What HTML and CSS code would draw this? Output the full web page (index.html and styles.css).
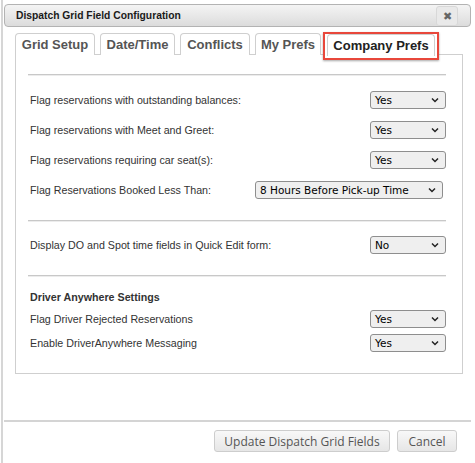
FILE: index.html
```html
<!DOCTYPE html>
<html>
<head>
<meta charset="utf-8">
<link rel="stylesheet" href="styles.css">
</head>
<body>
<div class="dialog">
  <div class="titlebar">
    <span class="title">Dispatch Grid Field Configuration</span>
    <span class="close">✖</span>
  </div>
  <div class="content">
    <div class="tabs">
      <div class="tab t1">Grid Setup</div>
      <div class="tab t2">Date/Time</div>
      <div class="tab t3">Conflicts</div>
      <div class="tab t4">My Prefs</div>
      <div class="tab-highlight"><div class="tab active">Company Prefs</div></div>
    </div>
    <div class="panel">
      <div class="rule"></div>
      <div class="row"><span class="label">Flag reservations with outstanding balances:</span><div class="select"><span>Yes</span><svg width="8" height="6" viewBox="0 0 8 6"><path d="M1 1.5 L4 4.5 L7 1.5" fill="none" stroke="#222" stroke-width="1.5"/></svg></div></div>
      <div class="row"><span class="label">Flag reservations with Meet and Greet:</span><div class="select"><span>Yes</span><svg width="8" height="6" viewBox="0 0 8 6"><path d="M1 1.5 L4 4.5 L7 1.5" fill="none" stroke="#222" stroke-width="1.5"/></svg></div></div>
      <div class="row"><span class="label">Flag reservations requiring car seat(s):</span><div class="select"><span>Yes</span><svg width="8" height="6" viewBox="0 0 8 6"><path d="M1 1.5 L4 4.5 L7 1.5" fill="none" stroke="#222" stroke-width="1.5"/></svg></div></div>
      <div class="row"><span class="label">Flag Reservations Booked Less Than:</span><div class="select wide"><span>8 Hours Before Pick-up Time</span><svg width="8" height="6" viewBox="0 0 8 6"><path d="M1 1.5 L4 4.5 L7 1.5" fill="none" stroke="#222" stroke-width="1.5"/></svg></div></div>
      <div class="rule r2"></div>
      <div class="row"><span class="label">Display DO and Spot time fields in Quick Edit form:</span><div class="select"><span>No</span><svg width="8" height="6" viewBox="0 0 8 6"><path d="M1 1.5 L4 4.5 L7 1.5" fill="none" stroke="#222" stroke-width="1.5"/></svg></div></div>
      <div class="rule r3"></div>
      <div class="heading">Driver Anywhere Settings</div>
      <div class="row tight"><span class="label">Flag Driver Rejected Reservations</span><div class="select"><span>Yes</span><svg width="8" height="6" viewBox="0 0 8 6"><path d="M1 1.5 L4 4.5 L7 1.5" fill="none" stroke="#222" stroke-width="1.5"/></svg></div></div>
      <div class="row tight"><span class="label">Enable DriverAnywhere Messaging</span><div class="select"><span>Yes</span><svg width="8" height="6" viewBox="0 0 8 6"><path d="M1 1.5 L4 4.5 L7 1.5" fill="none" stroke="#222" stroke-width="1.5"/></svg></div></div>
    </div>
  </div>
  <div class="footer">
    <button class="btn b1">Update Dispatch Grid Fields</button>
    <button class="btn b2">Cancel</button>
  </div>
</div>
</body>
</html>
```
FILE: styles.css
```css
html, body { margin: 0; padding: 0; background: #fff; }
body { font-family: "Liberation Sans", Arial, sans-serif; color: #333; }

.dialog {
  margin-left: 1px;
  border-left: 2px solid #d6d6d6;
  height: 463px;
  padding: 4px 3px 0 1px;
  box-sizing: border-box;
  width: 473px;
}

.titlebar {
  position: relative;
  height: 23px;
  box-sizing: border-box;
  border: 1px solid #b3b3b3;
  border-radius: 4px;
  background: linear-gradient(#f4f4f4, #dcdcdc);
  display: flex;
  align-items: center;
  padding-left: 11px;
}
.title { font-size: 10.3px; font-weight: bold; color: #1a1a1a; }
.close {
  position: absolute;
  right: 12px;
  top: 1px;
  width: 20px;
  height: 18px;
  border-radius: 3px;
  background: #e9e9e9;
  border: 1px solid #d8d8d8;
  color: #666;
  font-size: 11px;
  display: flex;
  align-items: center;
  justify-content: center;
}

.content { padding: 6px 0 0 11px; height: 367px; box-sizing: border-box; }

.tabs { display: flex; align-items: flex-end; height: 22px; position: relative; z-index: 1; }
.tab {
  box-sizing: border-box;
  height: 22px;
  border: 1px solid #cfcfcf;
  border-bottom: none;
  border-radius: 4px 4px 0 0;
  background: #fff;
  font-weight: bold;
  font-size: 13px;
  color: #555;
  display: flex;
  align-items: center;
  justify-content: center;
  margin-right: 5px;
}
.t1 { width: 80px; }
.t2 { width: 75px; }
.t3 { width: 70px; }
.t4 { width: 66px; margin-right: 2px; }
.tab-highlight {
  border: 2px solid #e8473b;
  box-shadow: 0 1px 2px rgba(0,0,0,0.35);
  padding: 0 2px;
  margin-bottom: -5px;
  background: #fff;
  height: 28px;
  box-sizing: border-box;
  width: 116px;
}
.tab.active { width: 108px; height: 22px; color: #222; margin: 0; }

.panel {
  width: 448px;
  height: 320px;
  box-sizing: border-box;
  border: 1px solid #cfcfcf;
  margin-top: -1px;
  padding: 0 16px 0 12px;
}

.rule { height: 1px; background: #c8c8c8; border-bottom: 1px solid #ececec; margin: 19px 0 9px 0; }
.rule.r2 { margin: 15px 0 8px 0; }
.rule.r3 { margin: 15px 0 11px 0; }

.row {
  display: flex;
  justify-content: space-between;
  align-items: center;
  height: 30px;
  padding-left: 2px;
}
.row.tight { height: 24px; }
.label { font-size: 10.7px; color: #333; }
.heading { font-size: 10.7px; font-weight: bold; color: #333; padding-left: 2px; height: 18px; line-height: 18px; margin-bottom: 1px; }

.select {
  width: 76px;
  height: 18px;
  box-sizing: border-box;
  border: 1px solid #8e8e8e;
  border-radius: 3px;
  background: #efefef;
  display: flex;
  align-items: center;
  justify-content: space-between;
  padding: 0 6px 0 4px;
  font-family: "DejaVu Sans", sans-serif;
  font-size: 10.5px;
  color: #000;
}
.select.wide { width: 188px; margin-right: 3px; }

.footer {
  border-top: 2px solid #d4d4d4;
  margin-top: 26px;
  padding: 8px 14px 0 0;
  display: flex;
  justify-content: flex-end;
  gap: 7px;
}
.btn {
  height: 22px;
  box-sizing: border-box;
  border: 1px solid #cdcdcd;
  border-radius: 3px;
  background: linear-gradient(#f8f8f8, #e6e6e6);
  font-family: "Open Sans", sans-serif;
  font-size: 12px;
  color: #555;
  padding: 0;
}
.b1 { width: 176px; }
.b2 { width: 60px; }
```
